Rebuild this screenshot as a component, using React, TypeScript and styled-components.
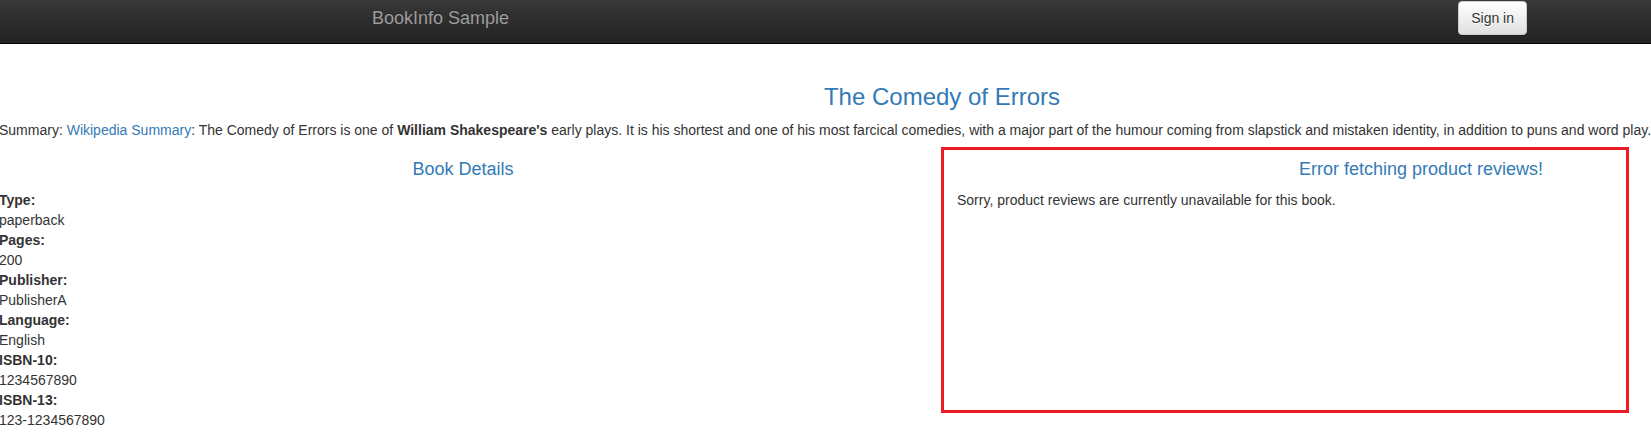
import React from "react";
import styled, { createGlobalStyle } from "styled-components";

const GlobalStyle = createGlobalStyle`
  html, body {
    margin: 0;
    padding: 0;
    overflow: hidden;
    background: #fff;
  }
  body {
    font-family: "Liberation Sans", Arial, Helvetica, sans-serif;
    font-size: 14px;
    line-height: 1.42857143;
    color: #333;
  }
  * {
    box-sizing: border-box;
  }
`;

// the shot is a crop of a wider page (1916px), shifted up and left
const Page = styled.div`
  width: 1916px;
  margin: -7px 0 0 -16px;
`;

const Navbar = styled.nav`
  min-height: 51px;
  margin-bottom: 20px;
  background-image: linear-gradient(to bottom, #3c3c3c 0, #222 100%);
  border-bottom: 1px solid #080808;
`;

const NavContainer = styled.div`
  width: 1170px;
  margin: 0 auto;
  padding: 0 15px;
  display: flex;
  justify-content: space-between;
  align-items: flex-start;
`;

const Brand = styled.a`
  display: block;
  height: 50px;
  margin-left: -15px;
  padding: 15px;
  font-size: 18px;
  line-height: 20px;
  color: #9d9d9d;
  text-decoration: none;
  text-shadow: 0 -1px 0 rgba(0, 0, 0, 0.25);
`;

const SignIn = styled.button`
  margin: 8px -15px 0 0;
  padding: 6px 12px;
  font-family: inherit;
  font-size: 14px;
  line-height: 20px;
  color: #333;
  background-image: linear-gradient(to bottom, #fff 0, #e0e0e0 100%);
  border: 1px solid #ccc;
  border-radius: 4px;
  text-shadow: 0 1px 0 #fff;
  box-shadow: inset 0 1px 0 rgba(255, 255, 255, 0.15), 0 1px 1px rgba(0, 0, 0, 0.075);
  cursor: pointer;
`;

const Fluid = styled.div`
  padding: 0 15px;
`;

const Row = styled.div`
  display: flex;
  margin: 0 -15px;
`;

const Col = styled.div<{ $half?: boolean }>`
  position: relative;
  width: ${(p) => (p.$half ? "50%" : "100%")};
  padding: 0 15px;
`;

const Title = styled.h3`
  margin: 20px 0 10px;
  font-size: 24px;
  font-weight: 500;
  line-height: 1.1;
  text-align: center;
  color: #337ab7;
`;

const SubTitle = styled.h4`
  margin: 10px 0;
  font-size: 18px;
  font-weight: 500;
  line-height: 1.1;
  text-align: center;
  color: #337ab7;
`;

const Text = styled.p`
  margin: 0 0 10px;
`;

const Link = styled.a`
  color: #337ab7;
  text-decoration: none;
`;

const Details = styled.dl`
  margin: 0 0 20px;
`;

const Term = styled.dt`
  font-weight: 700;
  line-height: 20px;
`;

const Value = styled.dd`
  margin: 0;
  line-height: 20px;
`;

// red marker drawn over the reviews column
const Highlight = styled.div`
  position: absolute;
  top: -3px;
  left: -1px;
  width: 688px;
  height: 266px;
  border: 3px solid #ed1c24;
  pointer-events: none;
`;

const details = [
  ["Type:", "paperback"],
  ["Pages:", "200"],
  ["Publisher:", "PublisherA"],
  ["Language:", "English"],
  ["ISBN-10:", "1234567890"],
  ["ISBN-13:", "123-1234567890"],
];

const App = () => {
  return (
    <Page>
      <GlobalStyle />
      <Navbar>
        <NavContainer>
          <Brand href="#">BookInfo Sample</Brand>
          <SignIn type="button">Sign in</SignIn>
        </NavContainer>
      </Navbar>

      <Fluid>
        <Row>
          <Col>
            <Title>The Comedy of Errors</Title>
            <Text>
              Summary: <Link href="#">Wikipedia Summary</Link>: The Comedy of
              Errors is one of <b>William Shakespeare's</b> early plays. It is
              his shortest and one of his most farcical comedies, with a major
              part of the humour coming from slapstick and mistaken identity,
              in addition to puns and word play.
            </Text>
          </Col>
        </Row>
        <Row>
          <Col $half>
            <SubTitle>Book Details</SubTitle>
            <Details>
              {details.map(([k, v]) => (
                <React.Fragment key={k}>
                  <Term>{k}</Term>
                  <Value>{v}</Value>
                </React.Fragment>
              ))}
            </Details>
          </Col>
          <Col $half>
            <SubTitle>Error fetching product reviews!</SubTitle>
            <Text>
              Sorry, product reviews are currently unavailable for this book.
            </Text>
            <Highlight />
          </Col>
        </Row>
      </Fluid>
    </Page>
  );
};

export default App;
